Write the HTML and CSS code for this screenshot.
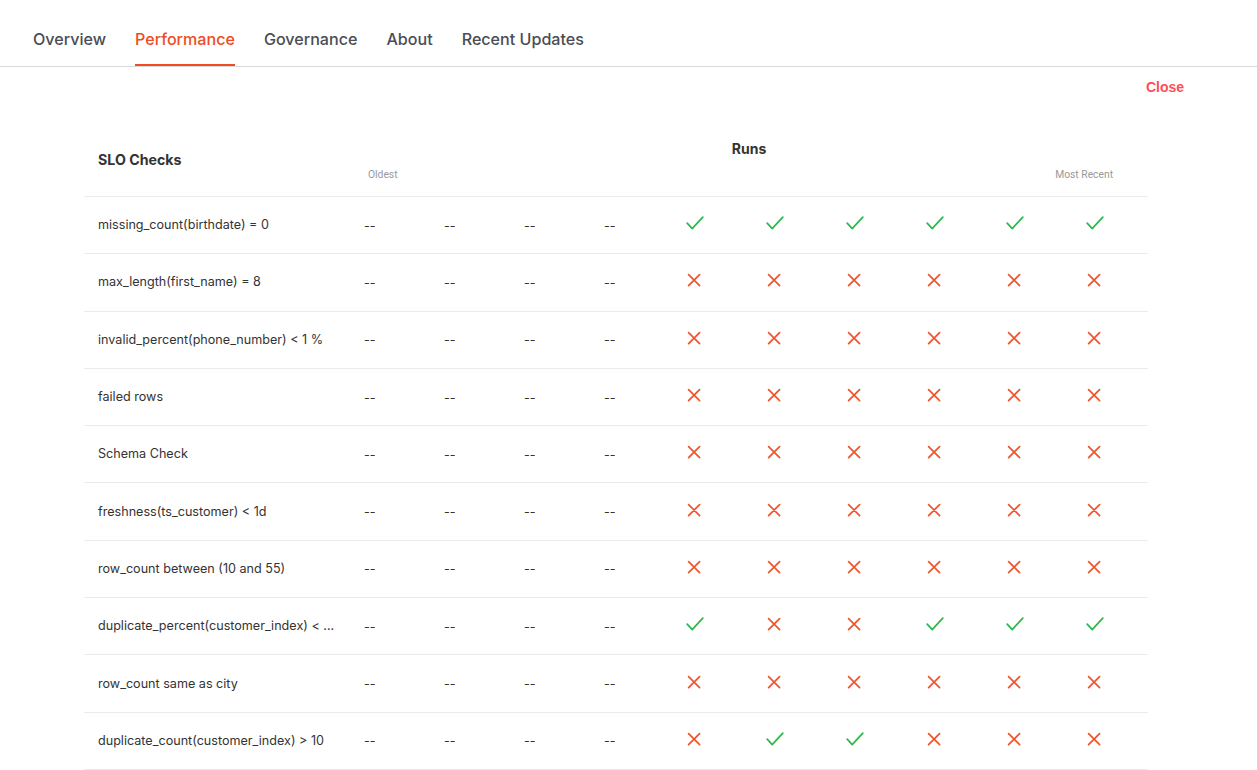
FILE: index.html
```html
<!DOCTYPE html>
<html>
<head>
<meta charset="utf-8">
<link rel="stylesheet" href="styles.css">
</head>
<body>
<svg class="defs" width="0" height="0">
  <defs>
    <symbol id="ok" viewBox="0 0 20 20"><path d="M3.2 10.2 L8.2 15.6 L18.8 4.2" fill="none" stroke="#2bb94a" stroke-width="1.7" stroke-linecap="round" stroke-linejoin="round"/></symbol>
    <symbol id="ko" viewBox="0 0 20 20"><path d="M4.6 4.6 L15.6 15.6 M15.6 4.6 L4.6 15.6" fill="none" stroke="#f0542c" stroke-width="1.7" stroke-linecap="round"/></symbol>
  </defs>
</svg>
<nav class="tabs">
  <a class="tab">Overview</a>
  <a class="tab active">Performance</a>
  <a class="tab">Governance</a>
  <a class="tab">About</a>
  <a class="tab">Recent Updates</a>
</nav>
<div class="close-row"><a class="close">Close</a></div>
<section class="slo">
  <div class="head">
    <div class="head-name">SLO Checks</div>
    <div class="head-runs">
      <div class="runs-title">Runs</div>
      <div class="runs-ends"><span>Oldest</span><span>Most Recent</span></div>
    </div>
  </div>
  <div class="row"><div class="name">missing_count(birthdate) = 0</div><div class="c">--</div><div class="c">--</div><div class="c">--</div><div class="c">--</div><div class="c"><svg class="ic"><use href="#ok"/></svg></div><div class="c"><svg class="ic"><use href="#ok"/></svg></div><div class="c"><svg class="ic"><use href="#ok"/></svg></div><div class="c"><svg class="ic"><use href="#ok"/></svg></div><div class="c"><svg class="ic"><use href="#ok"/></svg></div><div class="c"><svg class="ic"><use href="#ok"/></svg></div></div>
  <div class="row"><div class="name">max_length(first_name) = 8</div><div class="c">--</div><div class="c">--</div><div class="c">--</div><div class="c">--</div><div class="c"><svg class="ic"><use href="#ko"/></svg></div><div class="c"><svg class="ic"><use href="#ko"/></svg></div><div class="c"><svg class="ic"><use href="#ko"/></svg></div><div class="c"><svg class="ic"><use href="#ko"/></svg></div><div class="c"><svg class="ic"><use href="#ko"/></svg></div><div class="c"><svg class="ic"><use href="#ko"/></svg></div></div>
  <div class="row"><div class="name">invalid_percent(phone_number) &lt; 1 %</div><div class="c">--</div><div class="c">--</div><div class="c">--</div><div class="c">--</div><div class="c"><svg class="ic"><use href="#ko"/></svg></div><div class="c"><svg class="ic"><use href="#ko"/></svg></div><div class="c"><svg class="ic"><use href="#ko"/></svg></div><div class="c"><svg class="ic"><use href="#ko"/></svg></div><div class="c"><svg class="ic"><use href="#ko"/></svg></div><div class="c"><svg class="ic"><use href="#ko"/></svg></div></div>
  <div class="row"><div class="name">failed rows</div><div class="c">--</div><div class="c">--</div><div class="c">--</div><div class="c">--</div><div class="c"><svg class="ic"><use href="#ko"/></svg></div><div class="c"><svg class="ic"><use href="#ko"/></svg></div><div class="c"><svg class="ic"><use href="#ko"/></svg></div><div class="c"><svg class="ic"><use href="#ko"/></svg></div><div class="c"><svg class="ic"><use href="#ko"/></svg></div><div class="c"><svg class="ic"><use href="#ko"/></svg></div></div>
  <div class="row"><div class="name">Schema Check</div><div class="c">--</div><div class="c">--</div><div class="c">--</div><div class="c">--</div><div class="c"><svg class="ic"><use href="#ko"/></svg></div><div class="c"><svg class="ic"><use href="#ko"/></svg></div><div class="c"><svg class="ic"><use href="#ko"/></svg></div><div class="c"><svg class="ic"><use href="#ko"/></svg></div><div class="c"><svg class="ic"><use href="#ko"/></svg></div><div class="c"><svg class="ic"><use href="#ko"/></svg></div></div>
  <div class="row"><div class="name">freshness(ts_customer) &lt; 1d</div><div class="c">--</div><div class="c">--</div><div class="c">--</div><div class="c">--</div><div class="c"><svg class="ic"><use href="#ko"/></svg></div><div class="c"><svg class="ic"><use href="#ko"/></svg></div><div class="c"><svg class="ic"><use href="#ko"/></svg></div><div class="c"><svg class="ic"><use href="#ko"/></svg></div><div class="c"><svg class="ic"><use href="#ko"/></svg></div><div class="c"><svg class="ic"><use href="#ko"/></svg></div></div>
  <div class="row"><div class="name">row_count between (10 and 55)</div><div class="c">--</div><div class="c">--</div><div class="c">--</div><div class="c">--</div><div class="c"><svg class="ic"><use href="#ko"/></svg></div><div class="c"><svg class="ic"><use href="#ko"/></svg></div><div class="c"><svg class="ic"><use href="#ko"/></svg></div><div class="c"><svg class="ic"><use href="#ko"/></svg></div><div class="c"><svg class="ic"><use href="#ko"/></svg></div><div class="c"><svg class="ic"><use href="#ko"/></svg></div></div>
  <div class="row"><div class="name">duplicate_percent(customer_index) &lt; ...</div><div class="c">--</div><div class="c">--</div><div class="c">--</div><div class="c">--</div><div class="c"><svg class="ic"><use href="#ok"/></svg></div><div class="c"><svg class="ic"><use href="#ko"/></svg></div><div class="c"><svg class="ic"><use href="#ko"/></svg></div><div class="c"><svg class="ic"><use href="#ok"/></svg></div><div class="c"><svg class="ic"><use href="#ok"/></svg></div><div class="c"><svg class="ic"><use href="#ok"/></svg></div></div>
  <div class="row"><div class="name">row_count same as city</div><div class="c">--</div><div class="c">--</div><div class="c">--</div><div class="c">--</div><div class="c"><svg class="ic"><use href="#ko"/></svg></div><div class="c"><svg class="ic"><use href="#ko"/></svg></div><div class="c"><svg class="ic"><use href="#ko"/></svg></div><div class="c"><svg class="ic"><use href="#ko"/></svg></div><div class="c"><svg class="ic"><use href="#ko"/></svg></div><div class="c"><svg class="ic"><use href="#ko"/></svg></div></div>
  <div class="row"><div class="name">duplicate_count(customer_index) &gt; 10</div><div class="c">--</div><div class="c">--</div><div class="c">--</div><div class="c">--</div><div class="c"><svg class="ic"><use href="#ko"/></svg></div><div class="c"><svg class="ic"><use href="#ok"/></svg></div><div class="c"><svg class="ic"><use href="#ok"/></svg></div><div class="c"><svg class="ic"><use href="#ko"/></svg></div><div class="c"><svg class="ic"><use href="#ko"/></svg></div><div class="c"><svg class="ic"><use href="#ko"/></svg></div></div>
</section>
</body>
</html>
```

FILE: styles.css
```css
html, body {
  margin: 0;
  padding: 0;
  background: #fff;
}
body {
  font-family: Inter, "Noto Sans", "Liberation Sans", sans-serif;
  color: #333;
  overflow: hidden;
}
.defs {
  position: absolute;
  width: 0;
  height: 0;
}
.tabs {
  display: flex;
  gap: 29px;
  padding-left: 33px;
  border-bottom: 1px solid #d9d9d9;
  height: 66px;
}
.tab {
  display: block;
  box-sizing: border-box;
  height: 66px;
  padding-top: 28px;
  font-size: 16.1px;
  line-height: 22px;
  font-weight: 500;
  color: #4a4d55;
  border-bottom: 2px solid transparent;
}
.tab.active {
  color: #ee4c22;
  border-bottom-color: #ee4c22;
}
.close-row {
  display: flex;
  justify-content: flex-end;
  padding: 10px 73px 0 0;
}
.close {
  font-family: "Liberation Sans", Arial, sans-serif;
  font-weight: 700;
  font-size: 14px;
  line-height: 20px;
  color: #ff4d55;
}
.slo {
  width: 1064px;
  margin: 32px 0 0 84px;
}
.head {
  display: grid;
  grid-template-columns: 280px 770px;
  height: 68px;
  box-sizing: border-box;
  border-bottom: 1px solid #ebebeb;
}
.head-name {
  padding: 21px 0 0 14px;
  font-size: 14.2px;
  line-height: 20px;
  font-weight: 700;
  color: #333;
}
.head-runs {
  padding-top: 10px;
}
.runs-title {
  text-align: center;
  font-size: 14px;
  line-height: 20px;
  font-weight: 700;
  color: #333;
}
.runs-ends {
  display: flex;
  justify-content: space-between;
  margin-top: 9px;
  padding: 0 21px 0 4px;
  font-family: Roboto, "Liberation Sans", Arial, sans-serif;
  font-size: 10.3px;
  line-height: 14px;
  color: #999;
}
.row {
  display: grid;
  grid-template-columns: 280px repeat(9, 80px) 64px;
  align-items: center;
  height: 57.3px;
  box-sizing: border-box;
  border-bottom: 1px solid #ebebeb;
  font-size: 12.6px;
  color: #333;
}
.name {
  padding-left: 14px;
  padding-bottom: 1px;
  white-space: nowrap;
}
.c {
  display: flex;
  align-items: center;
}
.ic {
  width: 20px;
  height: 20px;
  margin: 0 0 4px 0;
}
```
